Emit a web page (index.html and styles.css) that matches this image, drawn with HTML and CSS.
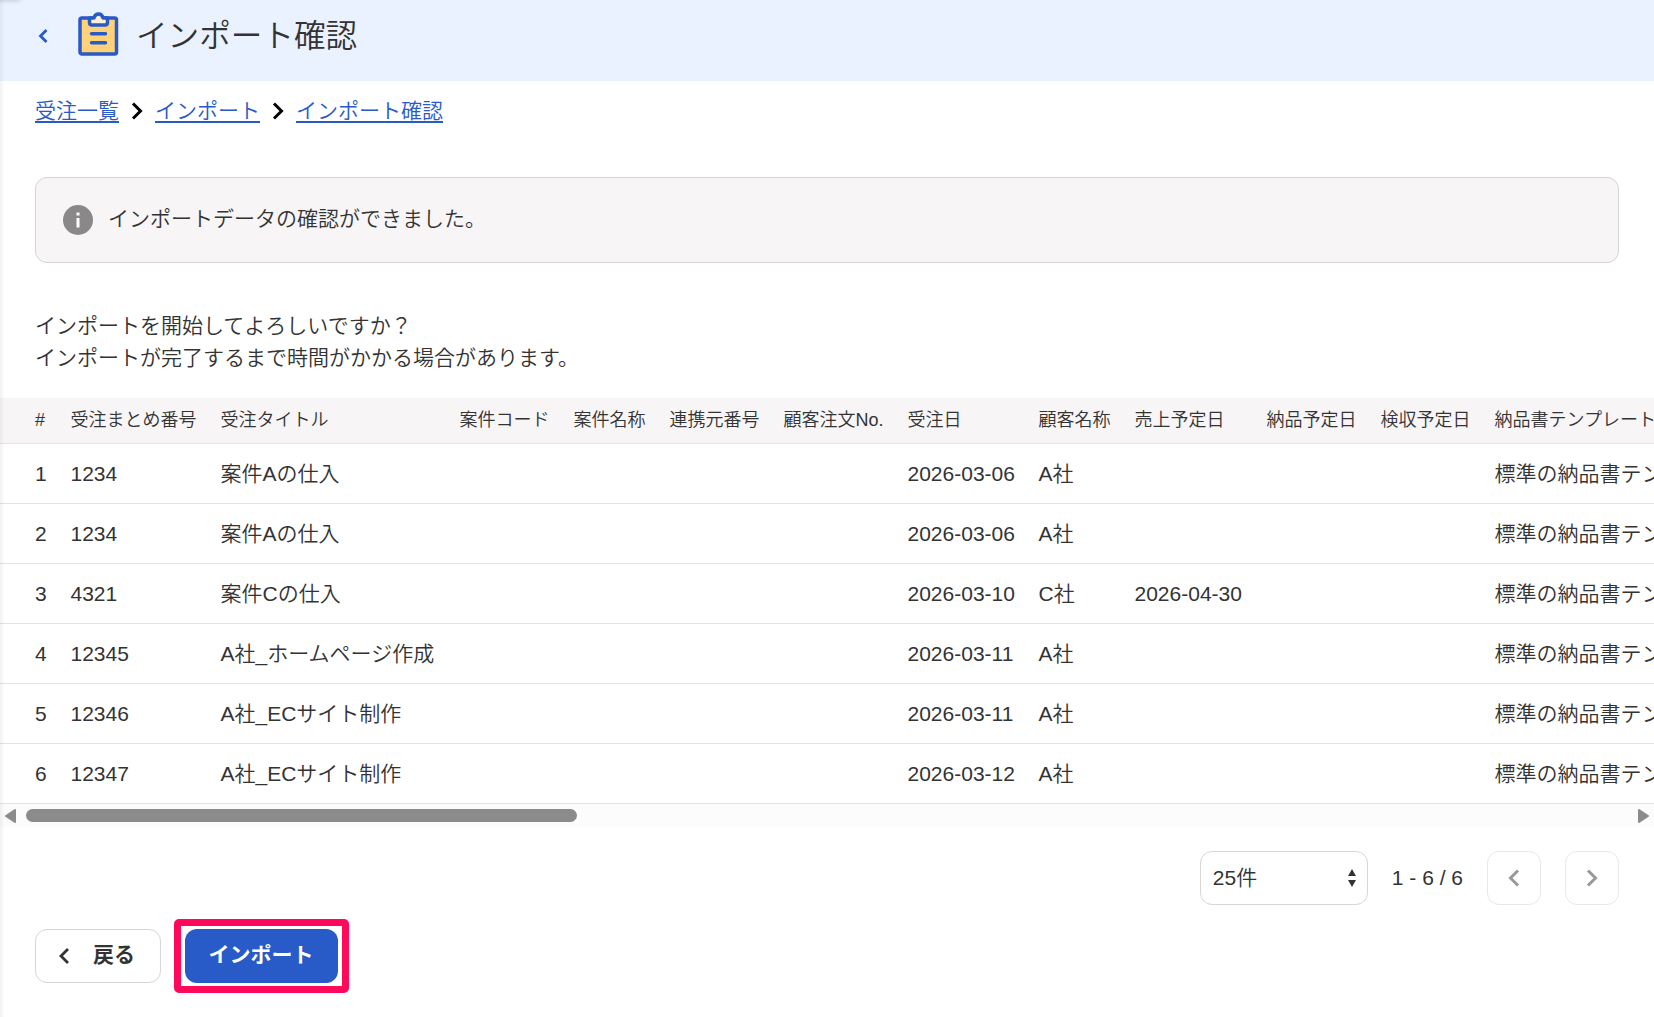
FILE: index.html
```html
<!DOCTYPE html>
<html lang="ja">
<head>
    <meta charset="UTF-8">
    <title>インポート確認</title>
    <link rel="stylesheet" href="styles.css">
</head>
<body>
<div class="page">

    <header class="header">
        <a href="#" class="header-back">
            <svg width="10" height="16" viewBox="0 0 10 16"><path d="M8.500 2L2.500 8L8.500 14"/></svg>
        </a>
        <svg class="header-icon" width="42" height="46" viewBox="0 0 42 46">
            <rect x="2" y="7" width="36.500" height="36" rx="2" fill="#ffd27a"/>
            <path d="M11.500 7h4.500c1-5.500 8-5.500 9 0h4.500v4.500q0 2.500-2.500 2.500H14q-2.500 0-2.500-2.500z" fill="#fff0d6"/>
            <path d="M13.500 22.800h14M13.500 31.800h14"/>
        </svg>
        <h1 class="header-title">インポート確認</h1>
    </header>

    <nav class="breadcrumb">
        <a href="#">受注一覧</a>
        <svg width="12" height="18" viewBox="0 0 12 18"><path d="M2 1.500L9.500 9L2 16.500"/></svg>
        <a href="#">インポート</a>
        <svg width="12" height="18" viewBox="0 0 12 18"><path d="M2 1.500L9.500 9L2 16.500"/></svg>
        <a href="#">インポート確認</a>
    </nav>

    <div class="notice">
        <svg width="30" height="30" viewBox="0 0 30 30">
            <circle cx="15" cy="15" r="15" fill="#8a8888"/>
            <path d="M13.500 7.500h3v3h-3zM13.500 13h3v9.500h-3z" fill="#fff"/>
        </svg>
        <span>インポートデータの確認ができました。</span>
    </div>

    <p class="message">インポートを開始してよろしいですか？<br>インポートが完了するまで時間がかかる場合があります。</p>

    <!-- 受注データ -->
    <div class="table-wrap">
        <table class="table">
            <colgroup>
                <col class="col-no"><col class="col-group"><col class="col-title"><col class="col-code">
                <col class="col-name"><col class="col-code"><col class="col-order"><col class="col-date">
                <col class="col-name"><col class="col-sales"><col class="col-code"><col class="col-code">
                <col class="col-template">
            </colgroup>
            <thead>
            <tr>
                <th>#</th><th>受注まとめ番号</th><th>受注タイトル</th><th>案件コード</th><th>案件名称</th>
                <th>連携元番号</th><th>顧客注文No.</th><th>受注日</th><th>顧客名称</th><th>売上予定日</th>
                <th>納品予定日</th><th>検収予定日</th><th>納品書テンプレート</th>
            </tr>
            </thead>
            <tbody>
            <tr>
                <td>1</td><td>1234</td><td>案件Aの仕入</td><td></td><td></td><td></td><td></td>
                <td>2026-03-06</td><td>A社</td><td></td><td></td><td></td><td>標準の納品書テンプレート</td>
            </tr>
            <tr>
                <td>2</td><td>1234</td><td>案件Aの仕入</td><td></td><td></td><td></td><td></td>
                <td>2026-03-06</td><td>A社</td><td></td><td></td><td></td><td>標準の納品書テンプレート</td>
            </tr>
            <tr>
                <td>3</td><td>4321</td><td>案件Cの仕入</td><td></td><td></td><td></td><td></td>
                <td>2026-03-10</td><td>C社</td><td>2026-04-30</td><td></td><td></td><td>標準の納品書テンプレート</td>
            </tr>
            <tr>
                <td>4</td><td>12345</td><td>A社_ホームページ作成</td><td></td><td></td><td></td><td></td>
                <td>2026-03-11</td><td>A社</td><td></td><td></td><td></td><td>標準の納品書テンプレート</td>
            </tr>
            <tr>
                <td>5</td><td>12346</td><td>A社_ECサイト制作</td><td></td><td></td><td></td><td></td>
                <td>2026-03-11</td><td>A社</td><td></td><td></td><td></td><td>標準の納品書テンプレート</td>
            </tr>
            <tr>
                <td>6</td><td>12347</td><td>A社_ECサイト制作</td><td></td><td></td><td></td><td></td>
                <td>2026-03-12</td><td>A社</td><td></td><td></td><td></td><td>標準の納品書テンプレート</td>
            </tr>
            </tbody>
        </table>
    </div>

    <!-- 横スクロールバー -->
    <div class="scrollbar">
        <svg width="11" height="14" viewBox="0 0 11 14"><path d="M10 1v12L1 7z"/></svg>
        <div class="scrollbar-track"><div class="scrollbar-thumb"></div></div>
        <svg width="11" height="14" viewBox="0 0 11 14"><path d="M1 1v12L10 7z"/></svg>
    </div>

    <div class="pager">
        <div class="pager-select">
            <span>25件</span>
            <svg width="8" height="18" viewBox="0 0 8 18"><path d="M0 7L4 0L8 7zM0 11H8L4 18z"/></svg>
        </div>
        <span class="pager-count">1 - 6 / 6</span>
        <a href="#" class="pager-button">
            <svg width="12" height="18" viewBox="0 0 12 18"><path d="M10 1.500L2.500 9L10 16.500"/></svg>
        </a>
        <a href="#" class="pager-button">
            <svg width="12" height="18" viewBox="0 0 12 18"><path d="M2 1.500L9.500 9L2 16.500"/></svg>
        </a>
    </div>

    <div class="actions">
        <a href="#" class="button">
            <svg width="10" height="16" viewBox="0 0 10 16"><path d="M9 1L2 8L9 15"/></svg>
            <span>戻る</span>
        </a>
        <div class="highlight">
            <a href="#" class="button button-primary">インポート</a>
        </div>
    </div>

</div>
</body>
</html>
```
FILE: styles.css
```css
* {
    box-sizing: border-box;
}

body {
    margin: 0;
    overflow: hidden;
    background: #fff;
    color: #333;
    font-family: "Liberation Sans", "Noto Sans CJK JP", sans-serif;
    font-size: 21px;
    font-weight: 350;
    line-height: 32px;
}

a {
    color: #285ac8;
}

svg {
    display: block;
    flex: none;
}

.page {
    position: relative;
    height: 1017px;
    overflow: hidden;
}

/* 左端に落ちるサイドメニューの影 */
.page::after {
    content: "";
    position: absolute;
    top: 0;
    left: 0;
    width: 5px;
    height: 100%;
    background: linear-gradient(to right, rgba(0, 0, 0, 0.05), transparent);
}

.page::before {
    content: "";
    position: absolute;
    top: -4px;
    left: -4px;
    width: 24px;
    height: 4px;
    box-shadow: 0 0 5px rgba(0, 0, 0, 0.25);
}

.header {
    display: flex;
    align-items: flex-start;
    height: 81px;
    padding-left: 38px;
    background: #eaf2ff;
}

.header-back {
    margin-top: 28px;
}

.header-back path {
    fill: none;
    stroke: #285ac8;
    stroke-width: 2.8;
}

.header-icon {
    margin: 11px 0 0 30px;
    stroke: #285ac8;
    stroke-width: 3.5;
    stroke-linecap: round;
    stroke-linejoin: round;
}

.header-title {
    margin: 12px 0 0 16px;
    font-size: 31.6px;
    font-weight: 350;
    line-height: 48px;
}

.breadcrumb {
    display: flex;
    align-items: center;
    height: 60px;
    padding-left: 35px;
}

.breadcrumb a {
    text-decoration-thickness: 2px;
    text-underline-offset: 3px;
}

.breadcrumb svg {
    margin: 0 12px;
}

.breadcrumb path {
    fill: none;
    stroke: #000;
    stroke-width: 3;
}

.notice {
    display: flex;
    align-items: center;
    gap: 15px;
    height: 86px;
    margin: 36px 35px 0;
    padding-left: 27px;
    border: 1px solid #d6d3d0;
    border-radius: 12px;
    background: #f7f5f6;
}

.notice span {
    padding-bottom: 2px;
}

.message {
    margin: 47px 0 24px 35px;
}

.table-wrap {
    overflow: hidden;
}

.table {
    width: 1760px;
    table-layout: fixed;
    border-collapse: separate;
    border-spacing: 0;
    white-space: nowrap;
}

.table th,
.table td {
    padding: 0;
    border-bottom: 1px solid #e3e3e3;
    text-align: left;
}

.table th {
    height: 46px;
    padding-bottom: 2px;
    background: #f7f5f6;
    font-size: 18px;
    font-weight: 350;
}

.table td {
    height: 60px;
}

.table th:first-child,
.table td:first-child {
    padding-left: 35px;
}

.col-no { width: 70.5px; }
.col-group { width: 150px; }
.col-title { width: 239px; }
.col-code { width: 114px; }
.col-name { width: 96px; }
.col-order { width: 124px; }
.col-date { width: 131px; }
.col-sales { width: 132px; }

.scrollbar {
    display: flex;
    align-items: center;
    height: 23px;
    padding: 0 5px;
    background: #fcfcfc;
}

.scrollbar path {
    fill: #8b8b8b;
    stroke: #8b8b8b;
    stroke-width: 2;
    stroke-linejoin: round;
}

.scrollbar-track {
    flex: 1;
    padding: 0 10px;
}

.scrollbar-thumb {
    width: 551px;
    height: 13px;
    border-radius: 7px;
    background: #8b8b8b;
}

.pager {
    display: flex;
    align-items: center;
    justify-content: flex-end;
    gap: 24px;
    margin: 24px 35px 0;
}

.pager-select {
    display: flex;
    align-items: center;
    justify-content: space-between;
    width: 168px;
    height: 54px;
    padding: 0 11px 0 12px;
    border: 1px solid #d6d6d6;
    border-radius: 12px;
}

.pager-select path {
    fill: #333;
}

.pager-button {
    display: flex;
    align-items: center;
    justify-content: center;
    width: 54px;
    height: 54px;
    border: 1px solid #e8e8e8;
    border-radius: 12px;
}

.pager-button path {
    fill: none;
    stroke: #999;
    stroke-width: 3;
}

.actions {
    display: flex;
    align-items: center;
    margin: 14px 0 0 35px;
}

.button {
    display: flex;
    align-items: center;
    gap: 24px;
    width: 126px;
    height: 54px;
    padding: 0 0 2px 23px;
    border: 1px solid #d6d6d6;
    border-radius: 12px;
    color: #333;
    font-weight: bold;
    text-decoration: none;
}

.button svg {
    margin-top: 2px;
}

.button path {
    fill: none;
    stroke: #333;
    stroke-width: 2.8;
}

/* インポートボタンの強調枠 */
.highlight {
    margin-left: 13px;
    padding: 3px 4px;
    border: 7px solid #ff0a5a;
    border-radius: 5px;
}

.button-primary {
    justify-content: center;
    width: 153px;
    padding: 0 1px 2px 0;
    border: 0;
    background: #285ac8;
    color: #fff;
}
```
